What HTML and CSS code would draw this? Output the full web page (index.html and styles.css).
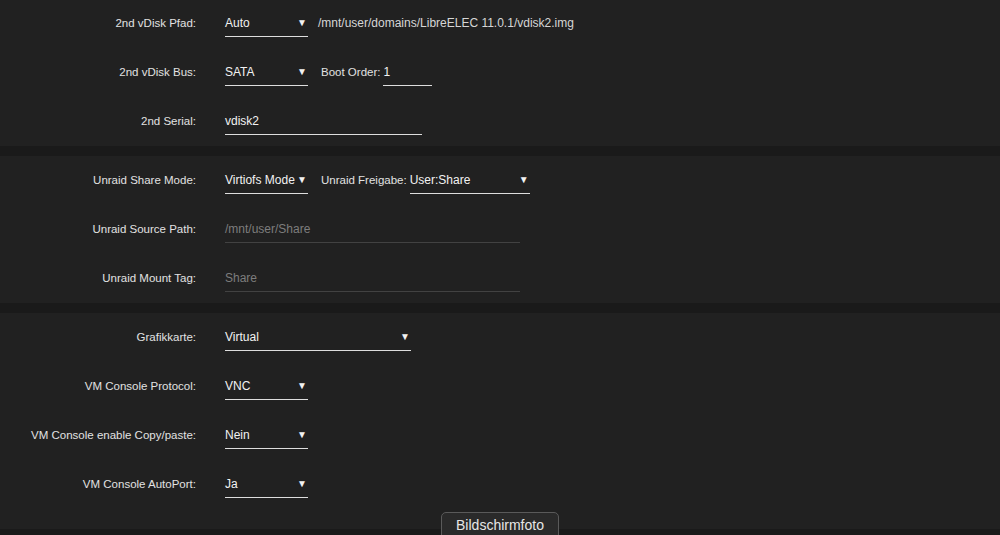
FILE: index.html
```html
<!DOCTYPE html>
<html lang="de">
<head>
    <meta charset="UTF-8">
    <title>VM bearbeiten</title>
    <link rel="stylesheet" href="styles.css">
</head>
<body>

    <div class="page">

        <!-- 2nd vDisk -->
        <div class="section first">
            <div class="row">
                <span class="label">2nd vDisk Pfad:</span>
                <span class="select narrow"><span>Auto</span><span class="arrow">&#9660;</span></span>
                <span class="path">/mnt/user/domains/LibreELEC 11.0.1/vdisk2.img</span>
            </div>
            <div class="row">
                <span class="label">2nd vDisk Bus:</span>
                <span class="select narrow"><span>SATA</span><span class="arrow">&#9660;</span></span>
                <span class="inline-label">Boot Order:</span>
                <span class="input boot">1</span>
            </div>
            <div class="row">
                <span class="label">2nd Serial:</span>
                <span class="input serial">vdisk2</span>
            </div>
        </div>

        <!-- Unraid share -->
        <div class="section">
            <div class="row">
                <span class="label">Unraid Share Mode:</span>
                <span class="select narrow"><span>Virtiofs Mode</span><span class="arrow">&#9660;</span></span>
                <span class="inline-label">Unraid Freigabe:</span>
                <span class="select share"><span>User:Share</span><span class="arrow">&#9660;</span></span>
            </div>
            <div class="row">
                <span class="label">Unraid Source Path:</span>
                <span class="input wide disabled">/mnt/user/Share</span>
            </div>
            <div class="row">
                <span class="label">Unraid Mount Tag:</span>
                <span class="input wide disabled">Share</span>
            </div>
        </div>

        <!-- Grafik / Console -->
        <div class="section last">
            <div class="row">
                <span class="label">Grafikkarte:</span>
                <span class="select gpu"><span>Virtual</span><span class="arrow">&#9660;</span></span>
            </div>
            <div class="row">
                <span class="label">VM Console Protocol:</span>
                <span class="select narrow"><span>VNC</span><span class="arrow">&#9660;</span></span>
            </div>
            <div class="row">
                <span class="label">VM Console enable Copy/paste:</span>
                <span class="select narrow"><span>Nein</span><span class="arrow">&#9660;</span></span>
            </div>
            <div class="row">
                <span class="label">VM Console AutoPort:</span>
                <span class="select narrow"><span>Ja</span><span class="arrow">&#9660;</span></span>
            </div>
        </div>

    </div>

    <div class="screenshot-tip">Bildschirmfoto</div>

</body>
</html>
```

FILE: styles.css
```css
body {
    margin: 0;
    background: #1a1a1a;
    font-family: "Liberation Sans", Arial, sans-serif;
    font-size: 12px;
    color: #e4e4e4;
    overflow: hidden;
}

.page {
    display: flex;
    flex-direction: column;
    gap: 10px; /* darker band between sections */
}

.section {
    background: #212121;
}
.section.first { margin-top: -1px; }
.section.last { padding-bottom: 20px; }

.row {
    display: flex;
    align-items: flex-start;
    height: 49px;
    box-sizing: border-box;
    padding-top: 16px;
    line-height: 16px;
    white-space: nowrap;
}

.label {
    width: 196px;
    margin-right: 29px;
    text-align: right;
    font-size: 11.5px;
    color: #e2e2e2;
    flex-shrink: 0;
}

/* underlined controls */
.select,
.input {
    display: flex;
    justify-content: space-between;
    box-sizing: border-box;
    padding-bottom: 5px;
    border-bottom: 1px solid #dedede;
    color: #f2f2f2;
    flex-shrink: 0;
}
.arrow {
    font-size: 10px;
    line-height: 15px;
    margin-right: 1px;
    color: #f2f2f2;
}

.select.narrow { width: 83px; }
.select.share { width: 120px; }
.select.gpu { width: 186px; }

.input.boot { width: 49px; }
.input.serial { width: 197px; }
.input.wide { width: 295px; }
.input.disabled {
    color: #7d7d7d;
    border-bottom-color: #424242;
}

.path {
    margin-left: 10px;
    color: #d6d6d6;
}
.inline-label {
    margin-left: 13px;
    margin-right: 3px;
    font-size: 11.5px;
    color: #e2e2e2;
}

/* macOS screenshot hint, lies over the bottom edge */
.screenshot-tip {
    position: absolute;
    left: 441px;
    top: 512px;
    width: 118px;
    height: 30px;
    box-sizing: border-box;
    padding-top: 4px;
    text-align: center;
    background: #2a2a2a;
    border: 1px solid #5a5a5a;
    border-radius: 5px;
    font-family: "Liberation Sans", Arial, sans-serif;
    font-size: 14px;
    color: #e6e6e6;
}
```
